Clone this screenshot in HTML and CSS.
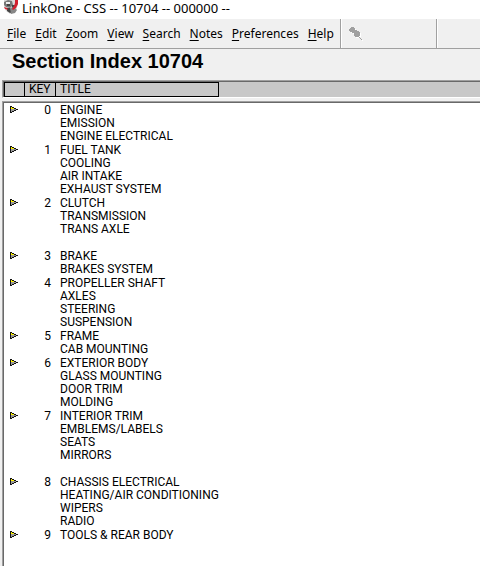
FILE: index.html
```html
<!DOCTYPE html>
<html lang="en">
<head>
<meta charset="utf-8">
<title>LinkOne - CSS -- 10704 -- 000000 --</title>
<link rel="stylesheet" href="styles.css">
</head>
<body>
<svg class="defs" aria-hidden="true">
  <symbol id="arrow" viewBox="0 0 8 7">
    <path fill="#fff200" d="M1 1h2v1h2v1h1v1H1z"/>
    <path fill="#999" d="M1 3h5v1H4v1H2v1H1z"/>
    <path fill="#111" d="M0 0h1v7H0zM1 0h1v1H1zM2 1h2v1H2zM4 2h2v1H4zM6 3h2v1H6zM4 4h2v1H4zM2 5h2v1H2zM1 6h1v1H1z"/>
  </symbol>
</svg>
<header class="titlebar">
  <svg class="logo" viewBox="0 0 16 14" aria-hidden="true">
    <path fill="#d9d9d9" d="M1 0h11l3 4-2 7-6 3-4-3-2-4z"/>
    <path fill="#777" d="M1 2l4-2 4 1 1 4-3 3-4-1-2-2z"/>
    <path fill="#eee" d="M3 2h4v2H3z"/>
    <path fill="#444" d="M4 4h3v2H4zM9 5h3v3H9zM4 8l3 0 3 4-3 1-3-2z"/>
    <path fill="#888" d="M7 8l4-1 3 3-2 3-4 1z"/>
    <path fill="#d3202f" d="M12 0h3v4l-2 4-3 2-1-1 2-3 1-3zM1 7l3 1 1 2-3-1z"/>
  </svg>
  <span>LinkOne - CSS -- 10704 -- 000000 --</span>
</header>
<nav class="toolbar">
  <div class="menu">
    <button><u>F</u>ile</button>
    <button><u>E</u>dit</button>
    <button><u>Z</u>oom</button>
    <button><u>V</u>iew</button>
    <button><u>S</u>earch</button>
    <button><u>N</u>otes</button>
    <button><u>P</u>references</button>
    <button><u>H</u>elp</button>
  </div>
  <div class="tools">
    <button class="pin" aria-label="Pin">
      <svg viewBox="0 0 14 14" aria-hidden="true">
        <path fill="#fff" transform="translate(1 1)" d="M2 0h3v1h1v2h2v1h2v1h1v4h-1v1h1v1h1v1h1v1h-1v-1h-1v-1h-1v-1H6V9H5V6H3V5H1V4H0V2h1V1h1z"/>
        <path fill="#a0a0a0" d="M2 0h3v1h1v2h2v1h2v1h1v4h-1v1h1v1h1v1h1v1h-1v-1h-1v-1h-1v-1H6V9H5V6H3V5H1V4H0V2h1V1h1z"/>
      </svg>
    </button>
  </div>
  <div class="tools rest"></div>
</nav>
<main>
  <h1>Section Index 10704</h1>
  <div class="pane head">
    <table class="columns">
      <tr><th class="mark" aria-label="Open"></th><th class="key">KEY</th><th class="name">TITLE</th></tr>
    </table>
  </div>
  <div class="pane list">
    <table>
      <tr><td class="mark"><svg><use href="#arrow"/></svg></td><td class="key">0</td><td class="name">ENGINE<br>EMISSION<br>ENGINE ELECTRICAL</td></tr>
      <tr><td class="mark"><svg><use href="#arrow"/></svg></td><td class="key">1</td><td class="name">FUEL TANK<br>COOLING<br>AIR INTAKE<br>EXHAUST SYSTEM</td></tr>
      <tr><td class="mark"><svg><use href="#arrow"/></svg></td><td class="key">2</td><td class="name">CLUTCH<br>TRANSMISSION<br>TRANS AXLE<br><br></td></tr>
      <tr><td class="mark"><svg><use href="#arrow"/></svg></td><td class="key">3</td><td class="name">BRAKE<br>BRAKES SYSTEM</td></tr>
      <tr><td class="mark"><svg><use href="#arrow"/></svg></td><td class="key">4</td><td class="name">PROPELLER SHAFT<br>AXLES<br>STEERING<br>SUSPENSION</td></tr>
      <tr><td class="mark"><svg><use href="#arrow"/></svg></td><td class="key">5</td><td class="name">FRAME<br>CAB MOUNTING</td></tr>
      <tr><td class="mark"><svg><use href="#arrow"/></svg></td><td class="key">6</td><td class="name">EXTERIOR BODY<br>GLASS MOUNTING<br>DOOR TRIM<br>MOLDING</td></tr>
      <tr><td class="mark"><svg><use href="#arrow"/></svg></td><td class="key">7</td><td class="name">INTERIOR TRIM<br>EMBLEMS/LABELS<br>SEATS<br>MIRRORS<br><br></td></tr>
      <tr><td class="mark"><svg><use href="#arrow"/></svg></td><td class="key">8</td><td class="name">CHASSIS ELECTRICAL<br>HEATING/AIR CONDITIONING<br>WIPERS<br>RADIO</td></tr>
      <tr><td class="mark"><svg><use href="#arrow"/></svg></td><td class="key">9</td><td class="name">TOOLS &amp; REAR BODY</td></tr>
    </table>
  </div>
</main>
</body>
</html>
```
FILE: styles.css
```css
* { box-sizing: border-box; }
body {
  margin: 0;
  min-height: 100vh;
  display: flex;
  flex-direction: column;
  background: #fff;
  color: #000;
  font: 12px/13px Roboto, "Liberation Sans", sans-serif;
}
.defs { display: none; }
button {
  margin: 0;
  padding: 0;
  border: 0;
  background: none;
  color: inherit;
  font: inherit;
}
.titlebar {
  display: flex;
  gap: 3px;
  height: 19px;
  padding-left: 3px;
  font: 13px/16px "Noto Sans", sans-serif;
  white-space: nowrap;
}
.logo { width: 16px; height: 14px; }
.toolbar {
  display: flex;
  height: 30px;
  border-bottom: 1px solid #a0a0a0;
  background: #f0f0f0;
}
.menu {
  display: flex;
  gap: 9px;
  width: 340px;
  padding-left: 7px;
  font: 12px/29px "Noto Sans", sans-serif;
  white-space: nowrap;
}
.menu u { text-underline-offset: 2px; }
.tools {
  width: 96px;
  padding: 8px;
  border-left: 1px solid #a0a0a0;
  box-shadow: inset 1px 0 #fff;
}
.rest { flex: 1; }
.pin svg { display: block; width: 14px; height: 14px; }
main {
  flex: 1;
  display: flex;
  flex-direction: column;
  padding-left: 2px;
  background: #f0f0f0;
}
h1 {
  margin: 0;
  padding: 0 10px;
  font: bold 20px/25px "Liberation Sans", sans-serif;
  height: 31px;
}
.pane {
  border-top: 1px solid #a0a0a0;
  border-left: 1px solid #a0a0a0;
  box-shadow: inset 1px 1px #696969;
}
.head {
  height: 18px;
  padding: 1px 0 0 1px;
  border-bottom: 1px solid #fff;
  background: #c8c8c8;
}
.list {
  flex: 1;
  margin-top: 3px;
  padding: 2px;
  background: #fff;
}
table { border-collapse: separate; border-spacing: 0; }
th, td {
  padding: 0 0 1px;
  font-weight: normal;
  text-align: left;
  vertical-align: top;
}
td.mark { width: 21px; }
td.key {
  width: 31px;
  padding-right: 6px;
  text-align: right;
}
td.name { padding-left: 3px; white-space: nowrap; }
.mark svg {
  display: block;
  width: 8px;
  height: 7px;
  margin: 2px 0 0 5px;
}
.columns {
  width: 215px;
  table-layout: fixed;
  border: 1px solid #000;
}
.columns th { padding: 0 4px; }
.columns th.mark { width: 19px; padding: 0; }
.columns th.key { width: 31px; }
.columns .key, .columns .name { border-left: 1px solid #000; }
```
